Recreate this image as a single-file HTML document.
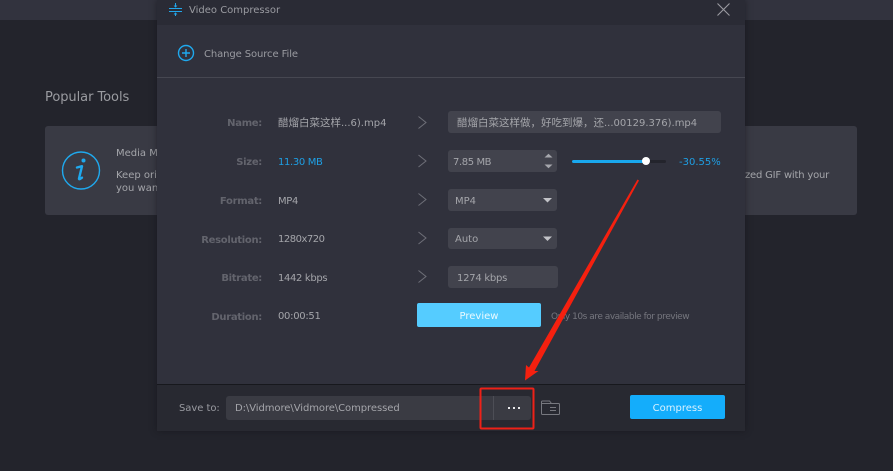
<!DOCTYPE html>
<html><head><meta charset="utf-8">
<style>
html,body{margin:0;padding:0;width:893px;height:471px;overflow:hidden;background:#23242c}
body{position:relative;font-family:"DejaVu Sans","Noto Sans CJK SC",sans-serif;font-size:10px;color:#a4a5aa}
.a{position:absolute;white-space:nowrap;line-height:14px}
.box{position:absolute;background:#42434d;border-radius:3px}
.l{position:absolute;right:631px;font-weight:bold;color:#63646d;white-space:nowrap;line-height:14px;letter-spacing:-.3px}
.v{position:absolute;left:278px;white-space:nowrap;line-height:14px;color:#a4a5aa;letter-spacing:-.35px}
.t{position:absolute;white-space:nowrap;line-height:14px;color:#a4a5aa}
.c{font-size:10.500px;letter-spacing:0}
svg{position:absolute;left:0;top:0}
</style></head>
<body>
<div style="position:absolute;left:0;top:0;width:893px;height:20px;background:#32333e"></div>
<div class="a" style="left:45px;top:89px;font-size:13px;line-height:18px;color:#9a9ba0;letter-spacing:-.05px">Popular Tools</div>
<div style="position:absolute;left:45px;top:126px;width:812px;height:89px;background:#393a44;border-radius:3px"></div>
<div class="a" style="left:116px;top:146.500px">Media M</div>
<div class="a" style="left:116px;top:168.500px">Keep orig</div>
<div class="a" style="left:116px;top:181.500px">you want</div>
<div class="a" style="left:745px;top:168.500px;letter-spacing:-.2px">zed GIF with your</div>

<div style="position:absolute;left:157px;top:0;width:588px;height:431px;background:#30313c;box-shadow:0 0 6px rgba(20,20,25,.6)"></div>
<div style="position:absolute;left:157px;top:0;width:588px;height:25px;background:#2a2b35"></div>
<div style="position:absolute;left:157px;top:77px;width:588px;height:1px;background:#464751"></div>
<div style="position:absolute;left:157px;top:384px;width:588px;height:47px;background:#282931;border-top:1px solid #17181d;box-sizing:border-box"></div>

<div class="t" style="left:189px;top:3px;color:#9a9ba1;margin-top:.5px">Video Compressor</div>
<div class="t" style="left:204px;top:47.500px;color:#9a9ba1;letter-spacing:-.1px">Change Source File</div>

<div class="l" style="top:116.500px">Name:</div>
<div class="l" style="top:155.500px">Size:</div>
<div class="l" style="top:194.500px">Format:</div>
<div class="l" style="top:233.500px">Resolution:</div>
<div class="l" style="top:271.500px">Bitrate:</div>
<div class="l" style="top:310.500px">Duration:</div>

<div class="v" style="top:116px;letter-spacing:0"><span class="c">醋熘白菜这样</span>...6).mp4</div>
<div class="v" style="top:155.500px;color:#1e9fe4">11.30 MB</div>
<div class="v" style="top:194.500px">MP4</div>
<div class="v" style="top:233px;letter-spacing:-.5px">1280x720</div>
<div class="v" style="top:271.500px">1442 kbps</div>
<div class="v" style="top:310px;letter-spacing:-.3px">00:00:51</div>

<div class="box" style="left:448px;top:111px;width:273px;height:22px"></div>
<div class="t" style="left:457px;top:116px"><span class="c">醋熘白菜这样做，好吃到爆，还</span>...00129.376).mp4</div>
<div class="box" style="left:448px;top:150px;width:109px;height:22px"></div>
<div class="t" style="left:453px;top:155.500px;letter-spacing:-.4px">7.85 MB</div>
<div class="box" style="left:448px;top:189px;width:109px;height:22px"></div>
<div class="t" style="left:455px;top:194.500px">MP4</div>
<div class="box" style="left:448px;top:228px;width:109px;height:21px"></div>
<div class="t" style="left:455px;top:233px">Auto</div>
<div class="box" style="left:448px;top:266px;width:110px;height:22px"></div>
<div class="t" style="left:457px;top:271.500px;letter-spacing:-.25px">1274 kbps</div>

<div style="position:absolute;left:572px;top:160px;width:94px;height:3px;background:#23242c;border-radius:2px"></div>
<div style="position:absolute;left:572px;top:160px;width:74px;height:3px;background:#19a8ee;border-radius:2px"></div>
<div style="position:absolute;left:642px;top:157px;width:8px;height:8px;background:#fff;border-radius:50%"></div>
<div class="t" style="left:679px;top:155.500px;color:#1e9fe4">-30.55%</div>

<div style="position:absolute;left:417px;top:303px;width:124px;height:24px;background:#55ccff;border-radius:2px;color:#eafaff;text-align:center;line-height:27px">Preview</div>
<div class="t" style="left:551px;top:310px;color:#75767e;font-size:9px;letter-spacing:-.47px">Only 10s are available for preview</div>

<div class="t" style="left:179px;top:402px;color:#9a9ba1;letter-spacing:-.05px">Save to:</div>
<div style="position:absolute;left:226px;top:396px;width:305px;height:24px;background:#3a3b43;border-radius:3px"></div>
<div style="position:absolute;left:493px;top:396px;width:1px;height:24px;background:#4d4e56"></div>
<div class="t" style="left:235px;top:402px;letter-spacing:-.07px">D:\Vidmore\Vidmore\Compressed</div>
<div style="position:absolute;left:630px;top:395px;width:95px;height:24px;background:#14adfb;border-radius:2px;color:#d8f1ff;text-align:center;line-height:27px">Compress</div>

<svg width="893" height="471" viewBox="0 0 893 471" fill="none">
  <!-- title icon -->
  <path d="M169 8.500h13M169 11.500h13" stroke="#22a6ea" stroke-width="1"/>
  <path d="M175.500 3v4M175.500 13v3" stroke="#22a6ea" stroke-width="1"/>
  <path d="M174 5.500l1.500 1.500 1.500-1.500M174 14.500l1.500-1.500 1.500 1.500" stroke="#22a6ea" stroke-width=".8"/>
  <!-- close -->
  <path d="M717.500 3.500l12 12M729.500 3.500l-12 12" stroke="#9a9ba1" stroke-width="1.100"/>
  <!-- plus -->
  <circle cx="186" cy="53" r="7.500" stroke="#1fa9ee" stroke-width="1.400"/>
  <path d="M186 49v8M182 53h8" stroke="#1fa9ee" stroke-width="1.400"/>
  <!-- info -->
  <circle cx="81" cy="170.500" r="18.500" stroke="#1fa9ee" stroke-width="1.400"/>
  <circle cx="83.500" cy="160.500" r="2" fill="#1fa9ee"/>
  <path d="M77 167.500l5-1.300-3 12.300c-.2 1 .6 1 3-.8" stroke="#1fa9ee" stroke-width="2.400" stroke-linecap="round" stroke-linejoin="round"/>
  <!-- chevrons -->
  <g stroke="#6e6f78" stroke-width="1">
    <path d="M418.500 116.500l7.500 6-7.500 6"/>
    <path d="M418.500 155l7.500 6-7.500 6"/>
    <path d="M418.500 193.500l7.500 6-7.500 6"/>
    <path d="M418.500 232l7.500 6-7.500 6"/>
    <path d="M418.500 270.500l7.500 6-7.500 6"/>
  </g>
  <!-- spinner -->
  <path d="M544.500 157.500l4-3.800 4 3.800z" fill="#a6a7ad"/>
  <path d="M544.500 164.500l4 3.800 4-3.800z" fill="#a6a7ad"/>
  <!-- dropdowns -->
  <path d="M543 198l4.500 4.500 4.500-4.500z" fill="#c2c3c8"/>
  <path d="M543 236.500l4.500 4.500 4.500-4.500z" fill="#c2c3c8"/>
  <!-- dots -->
  <rect x="508" y="407" width="2" height="2" fill="#e8e8ea"/>
  <rect x="513" y="407" width="2" height="2" fill="#e8e8ea"/>
  <rect x="518" y="407" width="2" height="2" fill="#e8e8ea"/>
  <!-- folder -->
  <path d="M541.500 403.500v-1.500a1 1 0 0 1 1-1h7l2 2.500M541.500 403.500h17a1 1 0 0 1 1 1v9a1 1 0 0 1-1 1h-16a1 1 0 0 1-1-1z" stroke="#77787f" stroke-width="1"/>
  <path d="M550 407.500h6M550 410.500h6" stroke="#77787f" stroke-width="1"/>
  <!-- red box -->
  <rect x="480.500" y="388.500" width="53" height="40" rx="1" stroke="#ee2118" stroke-width="2"/>
  <!-- red arrow -->
  <path d="M637.500 179.500L639 180.500 534.500 371 538.500 371 525 380.500 526 365 529 367.500z" fill="#f5200f"/>
</svg>
</body></html>
